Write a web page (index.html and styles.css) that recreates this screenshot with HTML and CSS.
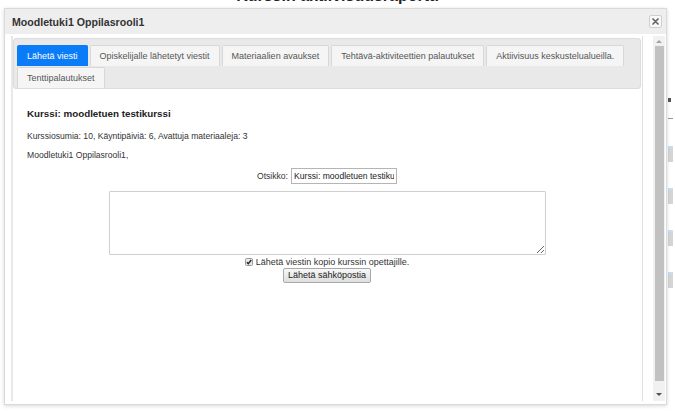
FILE: index.html
```html
<!DOCTYPE html>
<html lang="fi">
<head>
<meta charset="utf-8">
<title>Moodletuki1 Oppilasrooli1</title>
<link rel="stylesheet" href="styles.css">
</head>
<body>
<div class="page">
  <h1 class="page-title">Kurssin aktiivisuusraportti</h1>
  <div class="side">
    <span class="side-mark dark"></span>
    <span class="side-mark line"></span>
    <span class="side-field"></span>
    <span class="side-field"></span>
    <span class="side-field"></span>
    <span class="side-field"></span>
  </div>
</div>

<div class="dialog">
  <div class="dialog-header">
    <span class="dialog-title">Moodletuki1 Oppilasrooli1</span>
    <button class="close" type="button" aria-label="Sulje">
      <svg width="7" height="7" viewBox="0 0 7 7"><path d="M1 1L6 6M6 1L1 6" stroke="#666" stroke-width="1.7" stroke-linecap="round"/></svg>
    </button>
  </div>
  <div class="dialog-body">
    <div class="frame">
      <div class="tabs">
        <span class="tab active">Lähetä viesti</span>
        <span class="tab">Opiskelijalle lähetetyt viestit</span>
        <span class="tab">Materiaalien avaukset</span>
        <span class="tab">Tehtävä-aktiviteettien palautukset</span>
        <span class="tab">Aktiivisuus keskustelualueilla.</span>
        <span class="tab">Tenttipalautukset</span>
      </div>
      <div class="content">
        <h2 class="course">Kurssi: moodletuen testikurssi</h2>
        <p class="stats">Kurssiosumia: 10, Käyntipäiviä: 6, Avattuja materiaaleja: 3</p>
        <p class="stats">Moodletuki1 Oppilasrooli1,</p>
        <form class="mail-form">
          <div class="subject-row">
            <label class="subject-label" for="subject">Otsikko:</label>
            <input class="subject" id="subject" type="text" value="Kurssi: moodletuen testikurssi">
          </div>
          <textarea class="message"></textarea>
          <div class="copy-row">
            <svg class="check" width="8" height="8" viewBox="0 0 8 8"><rect x="0.5" y="0.5" width="7" height="7" rx="1" fill="#e8e8e8" stroke="#9a9a9a"/><path d="M1.8 4.2L3.3 5.7L6.3 2" fill="none" stroke="#222" stroke-width="1.3"/></svg>
            <span>Lähetä viestin kopio kurssin opettajille.</span>
          </div>
          <button class="send" type="button">Lähetä sähköpostia</button>
        </form>
      </div>
    </div>
    <div class="scrollbar">
      <span class="arrow up"></span>
      <span class="thumb"></span>
      <span class="arrow down"></span>
    </div>
  </div>
</div>
</body>
</html>
```

FILE: styles.css
```css
* { box-sizing: border-box; }
html, body { margin: 0; height: 100%; }
body {
  font-family: "Liberation Sans", Arial, sans-serif;
  background: #fff;
  color: #333;
  overflow: hidden;
  position: relative;
}

.page {
  display: flex;
  flex-direction: column;
}
.page-title {
  margin: -14px 0 0;
  text-align: center;
  font-size: 16px;
  line-height: 20px;
  font-weight: bold;
  color: #222;
}
.side {
  margin: 92px 0 0 668px;
  display: flex;
  flex-direction: column;
  width: 8px;
}
.side-mark.dark { height: 4px; width: 3px; background: #555; }
.side-mark.line { height: 1px; width: 5px; background: #999; margin-top: 16px; }
.side-field {
  height: 16px;
  width: 5px;
  margin-top: 26px;
  border-top: 2px solid #c9def5;
  background: #d5d5d5;
}
.side-field:nth-child(3) { margin-top: 27px; }

.dialog {
  position: absolute;
  left: 4px;
  top: 8px;
  width: 663px;
  height: 397px;
  border: 1px solid #dadada;
  background: #fff;
  box-shadow: 0 1px 4px rgba(0, 0, 0, 0.16);
  display: flex;
  flex-direction: column;
}

.dialog-header {
  flex: none;
  height: 25px;
  background: #eeeeee;
  display: flex;
  align-items: center;
  justify-content: space-between;
  padding: 0 4px 0 7px;
}
.dialog-title {
  font-size: 10.6px;
  font-weight: bold;
  color: #333;
}
.close {
  width: 13px;
  height: 13px;
  padding: 0;
  border: 1px solid #cfcfcf;
  border-radius: 2px;
  background: #f8f8f8;
  display: flex;
  align-items: center;
  justify-content: center;
}

.dialog-body {
  flex: 1;
  display: flex;
  padding: 2px 1px 3px 6px;
  min-height: 0;
}

.frame {
  width: 632px;
  flex: none;
  border-left: 2px solid #e8e8e8;
  border-right: 1px solid #e0e0e0;
  padding: 2px 1px 0 0;
}

.tabs {
  display: flex;
  flex-wrap: wrap;
  gap: 1px 2px;
  background: #e9e9e9;
  border: 1px solid #dcdcdc;
  border-radius: 3px;
  padding: 6px 3px 0;
}
.tab {
  height: 21px;
  line-height: 20px;
  padding: 0 9px;
  font-size: 9px;
  color: #555;
  background: #f5f5f5;
  border: 1px solid #d8d8d8;
  border-bottom: none;
  border-radius: 2px 2px 0 0;
  white-space: nowrap;
}
.tab.active {
  background: #0a7cf8;
  border-color: #0a7cf8;
  color: #fff;
}

.content { padding: 0 14px; }
.course {
  margin: 19px 0 10px;
  font-size: 9.8px;
  line-height: 12px;
  font-weight: bold;
  color: #222;
}
.stats {
  margin: 0 0 7px;
  font-size: 8.6px;
  line-height: 12px;
  color: #333;
}

.mail-form {
  display: flex;
  flex-direction: column;
  align-items: center;
}
.subject-row {
  display: flex;
  align-items: center;
  gap: 3px;
  font-size: 8.6px;
  color: #333;
}
.subject {
  width: 106px;
  height: 16px;
  padding: 0 2px;
  font-family: inherit;
  font-size: 8.6px;
  color: #222;
  border: 1px solid #b5b5b5;
  border-radius: 0;
}
.message {
  margin-top: 7px;
  width: 437px;
  height: 64px;
  border: 1px solid #cfcfcf;
  border-radius: 1px;
  font-family: inherit;
}
.copy-row {
  display: flex;
  align-items: center;
  gap: 3px;
  margin-top: 1px;
  font-size: 9px;
  line-height: 12px;
  color: #333;
}
.send {
  height: 15px;
  padding: 0 4px;
  font-family: inherit;
  font-size: 9px;
  line-height: 13px;
  color: #222;
  background: linear-gradient(#f7f7f7, #dedede);
  border: 1px solid #a9a9a9;
  border-radius: 2px;
}

.scrollbar {
  flex: none;
  width: 12px;
  margin-left: 10px;
  background: #f1f1f1;
  display: flex;
  flex-direction: column;
  align-items: center;
}
.arrow {
  flex: none;
  width: 0;
  height: 0;
  border-left: 3px solid transparent;
  border-right: 3px solid transparent;
}
.arrow.up { border-bottom: 3px solid #a3a3a3; margin: 4px 0 3px; }
.arrow.down { border-top: 3px solid #505050; margin: auto 0 5px; }
.thumb {
  flex: none;
  width: 9px;
  height: 335px;
  background: #c1c1c1;
}
```
